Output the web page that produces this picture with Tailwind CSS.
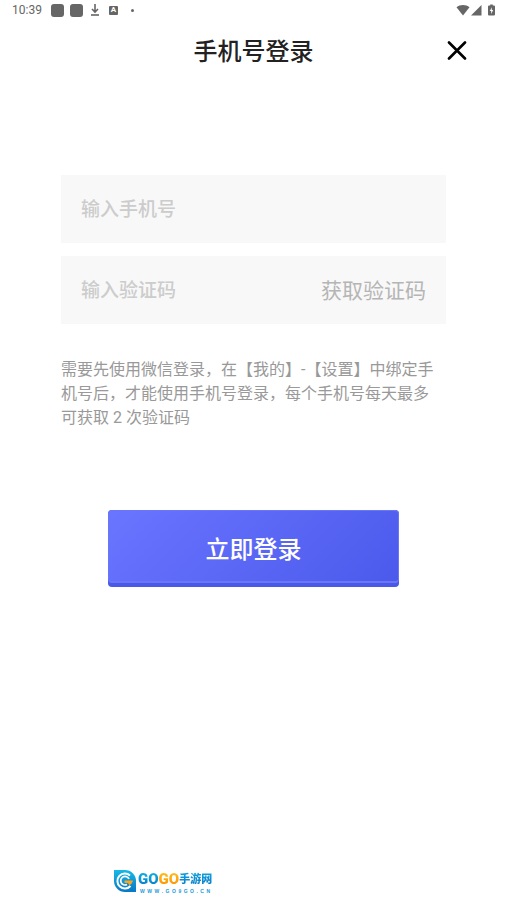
<!DOCTYPE html>
<html lang="zh-CN">
<head>
<meta charset="utf-8">
<meta name="viewport" content="width=device-width, initial-scale=1">
<title>手机号登录</title>
<script src="https://cdn.jsdelivr.net/npm/@tailwindcss/browser@4"></script>
</head>
<body class="flex min-h-screen flex-col bg-white font-[Roboto,'Noto_Sans_CJK_SC',sans-serif]">
  <div class="flex h-5 items-center justify-between pl-3 pr-[11px] text-[#666]">
    <div class="flex items-center">
      <span class="w-[39px] text-xs leading-5">10:39</span>
      <span class="size-[13px] rounded-[3px] bg-[#666]"></span>
      <span class="ml-1.5 size-[13px] rounded-[3px] bg-[#666]"></span>
      <svg class="ml-[7px] h-3 w-2.5" viewBox="0 0 10 12" fill="none" stroke="currentColor" aria-hidden="true"><path d="M5 0v8M2 5l3 3 3-3" stroke-width="1.6"/><path d="M1 11h8" stroke-width="1.6"/></svg>
      <span class="ml-[9px] flex h-[9px] w-[9px] items-center justify-center rounded-[1px] bg-[#666] text-[8px] font-bold leading-none text-white">A</span>
      <span class="ml-[13px] size-[3px] rounded-full bg-[#666]"></span>
    </div>
    <svg class="h-3 w-10" viewBox="0 0 40 12" fill="currentColor" aria-hidden="true">
      <path d="M.5 3.200C4 .2 10 .2 13.500 3.200L7 11.500Z"/>
      <path d="M25.500 1v10.500H15Z"/>
      <path fill-rule="evenodd" d="M33 1.500h1.200V.5h2.600v1H38a1 1 0 0 1 1 1V10.500a1 1 0 0 1-1 1h-5a1 1 0 0 1-1-1V2.500a1 1 0 0 1 1-1ZM35.800 3.200l-2 3.800h1.400v3l2-4h-1.400Z"/>
    </svg>
  </div>

  <header class="grid h-[61px] grid-cols-[1fr_auto_1fr] items-center px-10">
    <h1 class="col-start-2 pt-0.5 text-2xl font-medium text-[#222]">手机号登录</h1>
    <button type="button" aria-label="关闭" class="justify-self-end text-black">
      <svg class="size-5" viewBox="0 0 20 20" fill="none" stroke="currentColor" stroke-width="2.600" stroke-linecap="round"><path d="M2 1.500l16 16M18 1.500l-16 16"/></svg>
    </button>
  </header>

  <main class="flex-1 px-[61px] pt-[94px]">
    <form class="flex flex-col">
      <input type="tel" aria-label="手机号" placeholder="输入手机号" class="h-[68px] w-full bg-[#f8f8f8] px-5 text-[19px] font-medium text-[#222] outline-none placeholder:text-[#ccc]">
      <div class="mt-[13px] flex h-[68px] items-center bg-[#f8f8f8] pr-5">
        <input type="text" aria-label="验证码" placeholder="输入验证码" class="h-full min-w-0 flex-1 px-5 text-[19px] font-medium text-[#222] outline-none placeholder:text-[#ccc]">
        <button type="button" class="pt-1 text-[21px] text-[#b5b5b5]">获取验证码</button>
      </div>
      <p class="mt-[34px] pr-2 text-base leading-6 text-[#999]">需要先使用微信登录，在【我的】-【设置】中绑定手机号后，才能使用手机号登录，每个手机号每天最多可获取 2 次验证码</p>
      <button type="submit" class="mx-[47px] mt-20 rounded-[4px] bg-[#4a58e8] pb-1 text-2xl font-medium text-white">
        <span class="flex h-[73px] items-center justify-center rounded-[4px] border border-b-2 border-[#6a76f8] bg-linear-135 from-[#6a75ff] to-[#4c5aec] pt-2">立即登录</span>
      </button>
    </form>
  </main>

  <footer class="flex items-start gap-px pb-[9px] pl-[113px]">
    <svg class="h-6 w-6" viewBox="0 0 24 24" aria-hidden="true">
      <defs><linearGradient id="mark" x1="0" y1="0" x2="0" y2="1"><stop stop-color="#18b8e8"/><stop offset="1" stop-color="#0878c4"/></linearGradient></defs>
      <path d="M1 1H12A11 11 0 0 1 23 12V23H12A11 11 0 0 1 1 12Z" fill="url(#mark)"/>
      <path d="M17 6.500A7.500 7.500 0 1 0 17.500 17" fill="none" stroke="#fff" stroke-width="2"/>
      <path d="M16 10A4.300 4.300 0 1 0 14 15.500" fill="none" stroke="#fff" stroke-width="1.700"/>
      <path d="M11.500 11.500H20a7 7 0 0 1-3.500 5l-1.500-2.500h-3.500Z" fill="#ffa31a"/>
    </svg>
    <div class="flex flex-col pt-0.5">
      <div class="flex h-[17px] items-center whitespace-nowrap leading-none">
        <span class="bg-linear-to-b from-[#12b5e8] to-[#0874c4] bg-clip-text text-[15px] font-black leading-[17px] text-transparent">GO</span>
        <span class="bg-linear-to-b from-[#ffc21a] to-[#ff8a00] bg-clip-text text-[15px] font-black leading-[17px] text-transparent">GO</span>
        <span class="bg-linear-to-b from-[#12a5e0] to-[#0874c4] bg-clip-text text-[11px] font-black leading-[17px] text-transparent">手游网</span>
      </div>
      <span class="flex h-1.5 justify-between px-0.5 font-['Liberation_Sans',sans-serif] text-[5px] font-bold leading-[6px] text-[#1a9ad8]"><span>W</span><span>W</span><span>W</span><span>.</span><span>G</span><span>O</span><span>9</span><span>G</span><span>O</span><span>.</span><span>C</span><span>N</span></span>
    </div>
  </footer>
</body>
</html>
